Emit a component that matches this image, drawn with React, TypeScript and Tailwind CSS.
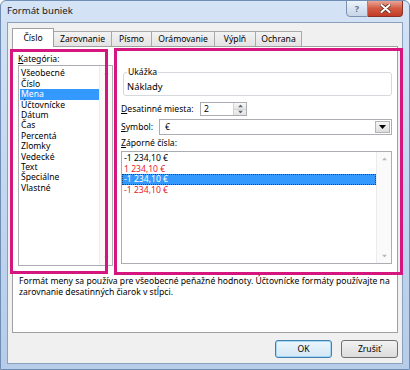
import React from "react";

const categories = [
  "Všeobecné",
  "Číslo",
  "Mena",
  "Účtovnícke",
  "Dátum",
  "Čas",
  "Percentá",
  "Zlomky",
  "Vedecké",
  "Text",
  "Špeciálne",
  "Vlastné",
];

const negatives = [
  { text: "-1 234,10 €", red: false, selected: false },
  { text: "1 234,10 €", red: true, selected: false },
  { text: "-1 234,10 €", red: false, selected: true },
  { text: "-1 234,10 €", red: true, selected: false },
];

const tabs = [
  { label: "Číslo", width: "w-[42px]", active: true },
  { label: "Zarovnanie", width: "w-[59px]", active: false },
  { label: "Písmo", width: "w-[41px]", active: false },
  { label: "Orámovanie", width: "w-[64px]", active: false },
  { label: "Výplň", width: "w-[42px]", active: false },
  { label: "Ochrana", width: "w-[47px]", active: false },
];

function Arrow({ up, className }: { up?: boolean; className?: string }) {
  return (
    <svg width="7" height="4" viewBox="0 0 7 4" className={className}>
      {up ? <path d="M0 4 L3.5 0 L7 4 Z" /> : <path d="M0 0 L3.5 4 L7 0 Z" />}
    </svg>
  );
}

function Scrollbar({ width }: { width: string }) {
  return (
    <div
      className={`${width} h-full flex flex-col justify-between items-center py-[5px] bg-[#fafafa] border-l border-[#ececec]`}
    >
      <Arrow up className="fill-[#b8b8b8] scale-75" />
      <Arrow className="fill-[#b8b8b8] scale-75" />
    </div>
  );
}

export default function App() {
  return (
    <div className="relative w-[410px] h-[370px] overflow-hidden rounded-t-[6px] border border-[#6f8db5] bg-gradient-to-b from-[#d4e3f5] via-[#c3d7ef] to-[#b6cce8] font-['Noto_Sans',sans-serif] text-[8.6px] text-black">
      {/* title bar */}
      <div className="h-[21px] flex justify-between">
        <div className="pl-[6px] flex items-center text-[9.6px] text-[#1a1a1a]">
          Formát buniek
        </div>
        <div className="flex pr-[6px] -mt-px">
          <div className="w-[22px] h-[17px] flex items-center justify-center rounded-bl-[4px] border border-[#7b91ad] bg-gradient-to-b from-[#eef3f9] to-[#c6d5e8] text-[9px] font-bold text-[#5f7089]">
            ?
          </div>
          <div className="w-[35px] h-[17px] flex items-center justify-center rounded-br-[4px] border border-l-0 border-[#8a3325] bg-gradient-to-b from-[#e9a596] via-[#d25a43] to-[#c23b26]">
            <svg width="11" height="9" viewBox="0 0 11 9">
              <path
                d="M1.5 1 L9.5 8 M9.5 1 L1.5 8"
                stroke="#5b1c12"
                strokeWidth="3.6"
                strokeLinecap="round"
              />
              <path
                d="M1.5 1 L9.5 8 M9.5 1 L1.5 8"
                stroke="#ffffff"
                strokeWidth="2.2"
                strokeLinecap="round"
              />
            </svg>
          </div>
        </div>
      </div>

      {/* client area */}
      <div className="ml-[6px] w-[396px] h-[342px] border border-[#8aa0bd] bg-[#f0f0f0] px-[4px] pt-[5px]">
        {/* tabs */}
        <div className="flex items-end h-[18px]">
          {tabs.map((t) =>
            t.active ? (
              <div
                key={t.label}
                className={`${t.width} h-[19px] -mb-px relative z-10 flex items-center justify-center border border-b-0 border-[#a0a0a0] bg-white`}
              >
                {t.label}
              </div>
            ) : (
              <div
                key={t.label}
                className={`${t.width} h-[15px] -ml-px flex items-center justify-center border border-b-0 border-[#a9a9a9] bg-gradient-to-b from-[#f3f3f3] to-[#e3e3e3]`}
              >
                {t.label}
              </div>
            ),
          )}
        </div>

        {/* tab panel */}
        <div className="h-[287px] border border-[#a0a0a0] bg-white">
          <div className="flex h-[219px]">
            {/* category column */}
            <div className="pl-[5px] pt-[7px]">
              <div className="leading-[10.4px]">
                <u>K</u>ategória:
              </div>
              <div className="mt-px w-[95px] h-[201px] flex border border-[#abadb3] bg-white">
                <div className="flex-1 pt-[2px] pl-px">
                  {categories.map((c) => (
                    <div
                      key={c}
                      className={
                        c === "Mena"
                          ? "leading-[10.4px] pl-px bg-[#3399ff] text-white"
                          : "leading-[10.4px] pl-px"
                      }
                    >
                      {c}
                    </div>
                  ))}
                </div>
                <Scrollbar width="w-[13px]" />
              </div>
            </div>

            {/* options column */}
            <div className="ml-[8px] w-[271px]">
              <div className="mt-[25px] ml-[2px] w-[269px] h-[24px] rounded-[3px] border border-[#d5d9de]">
                <div className="-mt-[6px] ml-[3px] w-fit bg-white px-px leading-[10.4px]">
                  Ukážka
                </div>
                <div className="mt-[5px] pl-[3px] leading-[10.4px] text-[9.4px]">
                  Náklady
                </div>
              </div>

              <div className="mt-[6px] flex items-center h-[14px]">
                <span className="w-[79px] whitespace-nowrap">
                  <u>D</u>esatinné miesta:
                </span>
                <div className="w-[47px] h-[14px] flex border border-[#abadb3] bg-white">
                  <div className="flex-1 pl-[3px] flex items-center">2</div>
                  <div className="w-[13px] flex flex-col border-l border-[#d3d3d3]">
                    <div className="flex-1 flex items-center justify-center bg-gradient-to-b from-[#f7f7f7] to-[#e6e6e6] border-b border-[#d3d3d3]">
                      <Arrow up className="fill-[#5e6a78] scale-75" />
                    </div>
                    <div className="flex-1 flex items-center justify-center bg-gradient-to-b from-[#f1f1f1] to-[#e2e2e2]">
                      <Arrow className="fill-[#5e6a78] scale-75" />
                    </div>
                  </div>
                </div>
              </div>

              <div className="mt-[3px] flex items-center h-[16px]">
                <span className="w-[38px] whitespace-nowrap">
                  <u>S</u>ymbol:
                </span>
                <div className="flex-1 h-[16px] flex border border-[#abadb3] bg-white">
                  <div className="flex-1 pl-[5px] flex items-center">€</div>
                  <div className="w-[15px] m-px flex items-center justify-center border border-[#b5b5b5] bg-gradient-to-b from-[#f5f5f5] to-[#dedede]">
                    <Arrow className="fill-black" />
                  </div>
                </div>
              </div>

              <div className="mt-[3px] leading-[10.4px]">
                <u>Z</u>áporné čísla:
              </div>
              <div className="mt-[3px] h-[113px] flex border border-[#abadb3] bg-white">
                <div className="flex-1 pt-px">
                  {negatives.map((n, i) => (
                    <div
                      key={i}
                      className={
                        n.selected
                          ? "leading-[10.4px] pl-[2px] bg-[#3399ff] text-white outline-1 outline-dotted -outline-offset-1 outline-[#1c3f63]"
                          : n.red
                            ? "leading-[10.4px] pl-[2px] text-[#e8232a]"
                            : "leading-[10.4px] pl-[2px]"
                      }
                    >
                      {n.text}
                    </div>
                  ))}
                </div>
                <Scrollbar width="w-[15px]" />
              </div>
            </div>
          </div>

          <div className="pl-[6px] pt-[10px] pr-[4px] leading-[11px]">
            Formát meny sa používa pre všeobecné peňažné hodnoty. Účtovnícke
            formáty používajte na zarovnanie desatinných čiarok v stĺpci.
          </div>
        </div>

        {/* buttons */}
        <div className="mt-[7px] flex justify-end gap-[9px]">
          <button className="w-[57px] h-[18px] rounded-[3px] border border-[#3c7fb1] bg-gradient-to-b from-[#eaf6fd] to-[#d4e7f5] shadow-[inset_0_0_0_1px_#a7d7f3]">
            OK
          </button>
          <button className="w-[57px] h-[18px] rounded-[3px] border border-[#707070] bg-gradient-to-b from-[#f2f2f2] to-[#dcdcdc]">
            Zrušiť
          </button>
        </div>
      </div>

      {/* annotation boxes */}
      <div className="absolute left-[9px] top-[48px] w-[98px] h-[225px] border-[3px] border-[#d6167f]" />
      <div className="absolute left-[113px] top-[47px] w-[289px] h-[227px] border-[3px] border-[#d6167f]" />
    </div>
  );
}
